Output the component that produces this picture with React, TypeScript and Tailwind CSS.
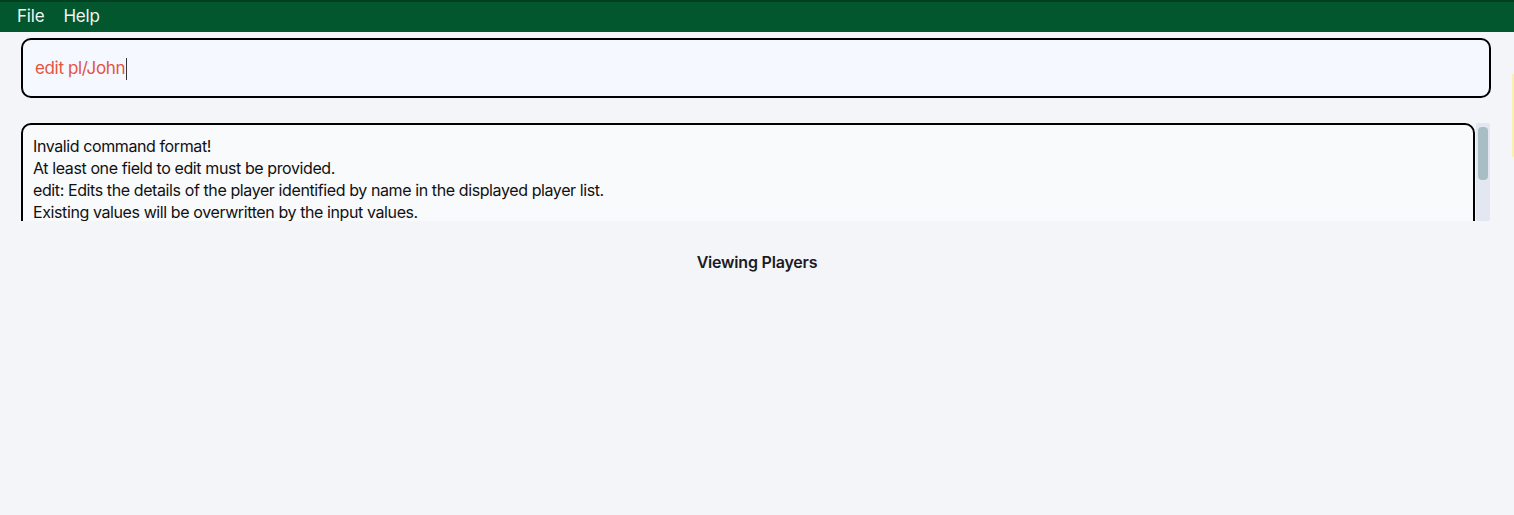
import React from "react";

export default function App() {
  const font = { fontFamily: "Inter, 'Noto Sans', sans-serif" };
  return (
    <div className="relative w-[1514px] h-[515px] bg-[#f4f5f9] overflow-hidden" style={font}>
      <div className="h-[32px] bg-[#02572e] border-t-2 border-[#013f21] flex items-center gap-[19px] pl-[17px] text-[17px] text-[#f1f5f1] tracking-[-0.2px]">
        <span>File</span>
        <span>Help</span>
      </div>
      <div className="px-[21px] pr-[23px] pt-[6px]">
        <div className="h-[60px] rounded-[10px] border-2 border-black bg-[#f5f8ff] flex items-center pl-[12px] pt-[2px] text-[17px] text-[#e3533f] tracking-[-0.35px]">
          <span>edit pl/John</span>
          <span className="inline-block w-[1px] h-[22px] bg-[#333] ml-[1px]" />
        </div>
      </div>
      <div className="mt-[25px] ml-[21px] mr-[24px] h-[98px] overflow-hidden flex gap-[1px]">
        <div className="flex-1 h-[120px] rounded-t-[10px] border-2 border-black bg-[#f9fafc] pl-[10px] pt-[10px] text-[16px] leading-[22px] text-[#111] tracking-[-0.4px]">
          <div>Invalid command format!</div>
          <div>At least one field to edit must be provided.</div>
          <div>edit: Edits the details of the player identified by name in the displayed player list.</div>
          <div>Existing values will be overwritten by the input values.</div>
        </div>
        <div className="w-[14px] bg-[#e3e7f1] rounded-[2px] pt-[4px] flex justify-center">
          <div className="w-[10px] h-[53px] rounded-[4px] bg-[#a9bec4]" />
        </div>
      </div>
      <div className="mt-[29px] text-center text-[16px] font-semibold text-[#1c1c1f] tracking-[-0.2px]">Viewing Players</div>
      <div className="absolute left-[1512px] top-[74px] w-[10px] h-[83px] border-l-2 border-[#fbefb4] bg-[#fffdf0]" />
    </div>
  );
}
